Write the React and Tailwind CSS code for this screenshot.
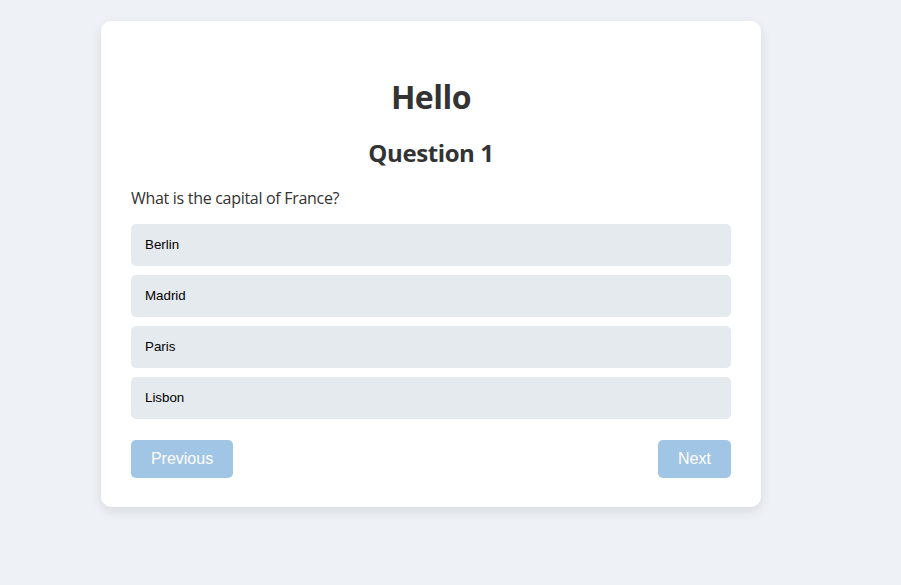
import React, { useState } from 'react';

const questions = [
  { q: 'What is the capital of France?', options: ['Berlin', 'Madrid', 'Paris', 'Lisbon'] },
];

const App = () => {
  const [index, setIndex] = useState(0);
  const current = questions[index];

  return (
    <div className="min-h-screen bg-[#eef2f7] pt-[21px] pl-[101px]" style={{ fontFamily: '"Open Sans", sans-serif' }}>
      <div className="w-[660px] bg-white rounded-[10px] shadow-[0_4px_12px_rgba(0,0,0,0.1)] px-[30px] pt-[30px] pb-[29px]">
        <h1 className="mt-[24px] text-center text-[32px] leading-[43px] font-bold text-[#333] tracking-[-0.5px]">Hello</h1>
        <h2 className="mt-[19px] text-center text-[24px] leading-[32px] font-bold text-[#333] tracking-[-0.4px]">Question {index + 1}</h2>
        <p className="mt-[19px] text-[16px] leading-[21px] text-[#333] tracking-[-0.3px]">{current.q}</p>

        <div className="mt-[15px] flex flex-col gap-[9px]">
          {current.options.map(opt => (
            <button
              key={opt}
              className="h-[42px] w-full shrink-0 rounded-[5px] bg-[#e5eaef] px-[14px] text-left text-[13.33px] text-black"
              style={{ fontFamily: '"Liberation Sans", Arial, sans-serif' }}
            >
              {opt}
            </button>
          ))}
        </div>

        <div className="mt-[21px] flex justify-between" style={{ fontFamily: '"Liberation Sans", Arial, sans-serif' }}>
          <button
            disabled={index === 0}
            onClick={() => setIndex(i => i - 1)}
            className="h-[38px] w-[102px] rounded-[5px] bg-[#a1c5e5] text-[16px] text-white"
          >
            Previous
          </button>
          <button
            disabled={index === questions.length - 1}
            onClick={() => setIndex(i => i + 1)}
            className="h-[38px] w-[73px] rounded-[5px] bg-[#a1c5e5] text-[16px] text-white"
          >
            Next
          </button>
        </div>
      </div>
    </div>
  );
};

export default App;
